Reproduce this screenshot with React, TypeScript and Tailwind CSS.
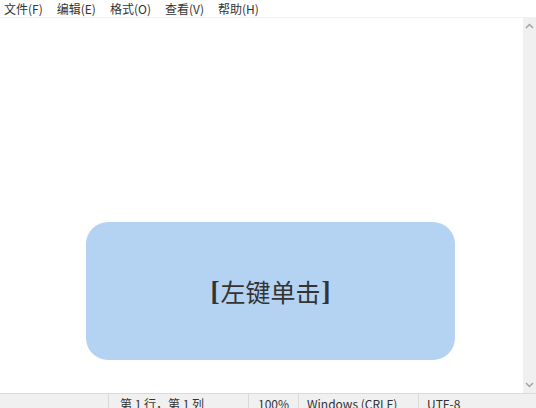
import React from 'react';

const menus = ['文件(F)', '编辑(E)', '格式(O)', '查看(V)', '帮助(H)'];

const App: React.FC = () => {
  return (
    <div
      className="w-[536px] h-[408px] overflow-hidden bg-white flex flex-col text-[#1f1f1f]"
      style={{ fontFamily: '"Noto Sans CJK SC", "Noto Sans", sans-serif' }}
    >
      {/* Menu bar */}
      <div className="h-[18px] shrink-0 flex items-center pl-[4px] gap-[14px] text-[12px] leading-none border-b border-[#f0f0f0]">
        {menus.map((m) => (
          <span key={m} className="text-[#333]">
            {m}
          </span>
        ))}
      </div>

      {/* Editor */}
      <div className="flex-1 flex min-h-0">
        <div className="flex-1 pt-[204px] pl-[86px]">
          <div className="w-[369px] h-[138px] rounded-[22px] bg-[#b4d3f2] flex items-center justify-center">
            <span className="text-[25px] leading-none text-[#333] flex items-center">
              <span className="font-bold text-[27px]" style={{ fontFamily: '"Liberation Serif", serif' }}>[</span>
              <span className="px-[1px]">左键单击</span>
              <span className="font-bold text-[27px]" style={{ fontFamily: '"Liberation Serif", serif' }}>]</span>
            </span>
          </div>
        </div>
        {/* Scrollbar */}
        <div className="w-[13px] bg-[#f0f0f0] flex flex-col items-center justify-between py-[5px]">
          <svg width="9" height="6" viewBox="0 0 9 6">
            <path d="M1 5 L4.5 1.5 L8 5" fill="none" stroke="#a3a3a3" strokeWidth="1.5" />
          </svg>
          <svg width="9" height="6" viewBox="0 0 9 6">
            <path d="M1 1 L4.5 4.5 L8 1" fill="none" stroke="#a3a3a3" strokeWidth="1.5" />
          </svg>
        </div>
      </div>

      {/* Status bar */}
      <div className="h-[15px] shrink-0 bg-[#f0f0f0] border-t border-[#dadada] flex text-[12px] leading-none text-[#333]">
        <div className="w-[108px]" />
        <div className="w-[140px] border-l border-[#d9d9d9] pl-[11px] pt-[4px] whitespace-nowrap">第 1 行，第 1 列</div>
        <div className="w-[50px] border-l border-[#d9d9d9] pl-[9px] pt-[4px]">100%</div>
        <div className="w-[120px] border-l border-[#d9d9d9] pl-[8px] pt-[4px] whitespace-nowrap">Windows (CRLF)</div>
        <div className="flex-1 border-l border-[#d9d9d9] pl-[8px] pt-[4px]">UTF-8</div>
      </div>
    </div>
  );
};

export default App;
